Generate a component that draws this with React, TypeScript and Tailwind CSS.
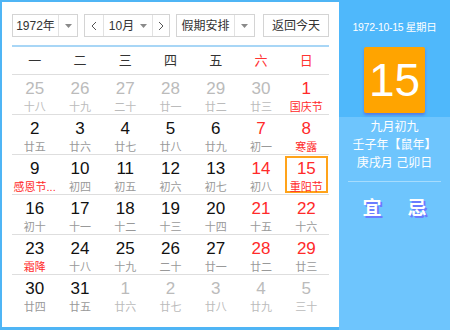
import React from "react";

type Cell = { d: number; l: string; dim?: boolean; red?: boolean; lred?: boolean; sel?: boolean };

const rows: Cell[][] = [
  [
    { d: 25, l: "十八", dim: true },
    { d: 26, l: "十九", dim: true },
    { d: 27, l: "二十", dim: true },
    { d: 28, l: "廿一", dim: true },
    { d: 29, l: "廿二", dim: true },
    { d: 30, l: "廿三", dim: true },
    { d: 1, l: "国庆节", red: true, lred: true },
  ],
  [
    { d: 2, l: "廿五" },
    { d: 3, l: "廿六" },
    { d: 4, l: "廿七" },
    { d: 5, l: "廿八" },
    { d: 6, l: "廿九" },
    { d: 7, l: "初一", red: true },
    { d: 8, l: "寒露", red: true, lred: true },
  ],
  [
    { d: 9, l: "感恩节...", lred: true },
    { d: 10, l: "初四" },
    { d: 11, l: "初五" },
    { d: 12, l: "初六" },
    { d: 13, l: "初七" },
    { d: 14, l: "初八", red: true },
    { d: 15, l: "重阳节", red: true, lred: true, sel: true },
  ],
  [
    { d: 16, l: "初十" },
    { d: 17, l: "十一" },
    { d: 18, l: "十二" },
    { d: 19, l: "十三" },
    { d: 20, l: "十四" },
    { d: 21, l: "十五", red: true },
    { d: 22, l: "十六", red: true },
  ],
  [
    { d: 23, l: "霜降", lred: true },
    { d: 24, l: "十八" },
    { d: 25, l: "十九" },
    { d: 26, l: "二十" },
    { d: 27, l: "廿一" },
    { d: 28, l: "廿二", red: true },
    { d: 29, l: "廿三", red: true },
  ],
  [
    { d: 30, l: "廿四" },
    { d: 31, l: "廿五" },
    { d: 1, l: "廿六", dim: true },
    { d: 2, l: "廿七", dim: true },
    { d: 3, l: "廿八", dim: true },
    { d: 4, l: "廿九", dim: true },
    { d: 5, l: "三十", dim: true },
  ],
];

const week = ["一", "二", "三", "四", "五", "六", "日"];

function Caret() {
  return (
    <svg width="7" height="4" viewBox="0 0 7 4">
      <path d="M0 0h7L3.5 4z" fill="#8a8a8a" />
    </svg>
  );
}

export default function App() {
  const font = { fontFamily: '"Liberation Sans", "Noto Sans CJK SC", sans-serif' };
  return (
    <div className="flex w-[450px] h-[330px] bg-white" style={font}>
      <div className="w-[339px] h-[330px] border-l-2 border-t-2 border-b-[3px] border-[#4fb5f5] px-[10px] pt-[12px]">
        <div className="flex h-[23px] text-[12px] text-[#333]">
          <div className="flex w-[66px] border border-[#d4d4d4]">
            <div className="w-[46px] flex items-center justify-center border-r border-[#e2e2e2]">1972年</div>
            <div className="flex-1 flex items-center justify-center"><Caret /></div>
          </div>
          <div className="flex w-[86px] ml-[6px] border border-[#d4d4d4]">
            <div className="w-[19px] flex items-center justify-center border-r border-[#e2e2e2] text-[#555]">
              <svg width="6" height="10" viewBox="0 0 6 10"><path d="M5 1L1 5l4 4" stroke="#555" fill="none" strokeWidth="1" /></svg>
            </div>
            <div className="w-[49px] flex items-center justify-center gap-[6px] border-r border-[#e2e2e2]">
              <span>10月</span>
              <Caret />
            </div>
            <div className="flex-1 flex items-center justify-center">
              <svg width="6" height="10" viewBox="0 0 6 10"><path d="M1 1l4 4-4 4" stroke="#555" fill="none" strokeWidth="1" /></svg>
            </div>
          </div>
          <div className="flex w-[79px] ml-[6px] border border-[#d4d4d4]">
            <div className="w-[58px] flex items-center justify-center border-r border-[#e2e2e2]">假期安排</div>
            <div className="flex-1 flex items-center justify-center"><Caret /></div>
          </div>
          <div className="w-[66px] ml-[8px] border border-[#d4d4d4] flex items-center justify-center">返回今天</div>
        </div>
        <div className="mt-[8px] h-[2px] bg-[#a8d6f6]" />
        <div className="grid grid-cols-7 h-[28px] border-b border-[#dedede] text-[13px]">
          {week.map((w, i) => (
            <div key={w} className={"flex items-center justify-center " + (i >= 5 ? "text-[#ff3333]" : "text-[#333]")}>
              {w}
            </div>
          ))}
        </div>
        {rows.map((r, ri) => (
          <div key={ri} className={"grid grid-cols-7 h-[40px] " + (ri < 5 ? "border-b border-[#dedede]" : "")}>
            {r.map((c, ci) => (
              <div key={ci} className="flex justify-center">
                <div
                  className={
                    "w-[43px] h-[37px] mt-px border-2 flex flex-col items-center " +
                    (c.sel ? "border-[#ffa31a]" : "border-transparent")
                  }
                >
                  <div
                    className={
                      "text-[17px] leading-[20px] mt-[1px] " +
                      (c.dim ? "text-[#bbbbbb]" : c.red ? "text-[#ff2a2a]" : "text-[#111]")
                    }
                  >
                    {c.d}
                  </div>
                  <div
                    className={
                      "text-[11px] leading-[14px] mt-[1px] whitespace-nowrap " +
                      (c.lred ? "text-[#ff2a2a]" : c.dim ? "text-[#bbbbbb]" : "text-[#999]")
                    }
                  >
                    {c.l}
                  </div>
                </div>
              </div>
            ))}
          </div>
        ))}
      </div>
      <div className="w-[111px] h-[330px] flex flex-col bg-[#6ec5fd]">
        <div className="h-[117px] bg-[#4fb8fb] flex flex-col items-center">
          <div className="mt-[19px] text-[10.5px] tracking-[-0.3px] text-white leading-[16px]">1972-10-15 星期日</div>
          <div className="mt-[12px] w-[61px] h-[66px] rounded-[2px] bg-[#ffa400] flex items-center justify-center text-white text-[46px] leading-none shadow-[0_2px_3px_rgba(90,80,220,0.6)]">
            15
          </div>
        </div>
        <div className="flex flex-col items-center text-white text-[12px] leading-[18px] mt-[1px]">
          <div>九月初九</div>
          <div>壬子年【鼠年】</div>
          <div>庚戌月 己卯日</div>
        </div>
        <div className="mx-[9px] mt-[9px] h-px bg-[#a6dcfd]" />
        <div className="flex justify-center gap-[26px] mt-[13px] text-white text-[19px] font-bold [text-shadow:2px_2px_0_#6a7bff]">
          <span>宜</span>
          <span>忌</span>
        </div>
      </div>
    </div>
  );
}
